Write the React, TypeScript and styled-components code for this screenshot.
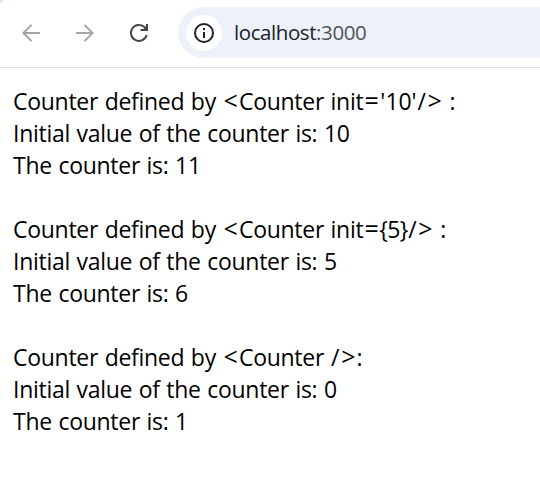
import React from "react";
import styled, { createGlobalStyle } from "styled-components";

const GlobalStyle = createGlobalStyle`
  * { box-sizing: border-box; }
  body { margin: 0; background: #fff; overflow: hidden; }
`;
const Page = styled.div`
  height: 484px;
  background: #fff;
  font-family: "Open Sans", "Noto Sans", sans-serif;
`;
const Toolbar = styled.header`
  display: flex;
  align-items: center;
  height: 68px;
  padding: 0 0 2px 19px;
  border-bottom: 1px solid #dfe1e5;
  background: linear-gradient(135deg, #d3e3fd 2px, #fff 3px);
`;
const NavIcon = styled.svg<{ $color: string }>`
  width: 24px;
  height: 24px;
  margin-right: 30px;
  flex: none;
  fill: none;
  stroke: ${(p) => p.$color};
  stroke-width: 2;
`;
const AddressBar = styled.div`
  display: flex;
  align-items: center;
  flex: 1;
  height: 51px;
  margin-left: -3px;
  padding-left: 8px;
  border-radius: 26px 0 0 26px;
  background: #ecf1fa;
`;
const InfoBadge = styled.div`
  display: grid;
  place-items: center;
  width: 36px;
  height: 36px;
  border-radius: 50%;
  background: #fff;
`;
const Url = styled.span`
  margin-left: 12px;
  padding-bottom: 2px;
  font-size: 20.5px;
  letter-spacing: -0.42px;
  color: #202124;
`;
const Port = styled.span`
  color: #505357;
`;
const Content = styled.main`
  padding: 17px 13px;
`;
const CounterBlock = styled.section`
  margin-bottom: 32px;
`;
const Line = styled.div`
  height: 32px;
  line-height: 32px;
  font-size: 23px;
  letter-spacing: -0.28px;
  word-spacing: 0.85px;
  white-space: pre;
  color: #000;
`;
const Glyph = styled.span<{ $width: number }>`
  display: inline-flex;
  justify-content: center;
  width: ${(p) => p.$width}px;
  font-size: ${(p) => (p.$width > 16 ? 25 : 23)}px;
  line-height: 30px;
  letter-spacing: 0;
`;

const glyphWidths: Record<string, number> = {
  "<": 16.5,
  ">": 16.5,
  "=": 16.5,
  "/": 9.5,
  "'": 5.7,
  "{": 7.5,
  "}": 7.5,
};

function Code({ text }: { text: string }) {
  return (
    <>
      {text.split(/([<>=/'{}])/).map((part, i) =>
        glyphWidths[part] ? <Glyph key={i} $width={glyphWidths[part]}>{part}</Glyph> : part,
      )}
    </>
  );
}

const counters = [
  { tag: "<Counter init='10'/> :", init: 10 },
  { tag: "<Counter init={5}/> :", init: 5 },
  { tag: "<Counter />:", init: 0 },
];

export default function App() {
  return (
    <Page>
      <GlobalStyle />
      <Toolbar>
        <NavIcon $color="#a5a5a5" viewBox="0 0 24 24"><path d="M21 12H4.500M12.500 3.900L4.400 12l8.100 8.100" /></NavIcon>
        <NavIcon $color="#a5a5a5" viewBox="0 0 24 24"><path d="M3 12h16.500M11.500 3.900l8.100 8.100-8.100 8.100" /></NavIcon>
        <NavIcon $color="#454746" viewBox="0 0 24 24">
          <path d="M19.700 14A8 8 0 1 1 17.700 6.300L19.300 8" />
          <path d="M20 3v6h-6.500" />
          <path d="M20 4.500v4.500h-4.500z" fill="#454746" stroke="none" />
        </NavIcon>
        <AddressBar>
          <InfoBadge>
            <svg width="22" height="22" viewBox="0 0 22 22" fill="none" stroke="#202124" strokeWidth="2">
              <circle cx="11" cy="11" r="9" /><path d="M11 10v6M11 6v2" />
            </svg>
          </InfoBadge>
          <Url>localhost<Port>:3000</Port></Url>
        </AddressBar>
      </Toolbar>
      <Content>
        {counters.map(({ tag, init }) => (
          <CounterBlock key={tag}>
            <Line>Counter defined by <Code text={tag} /></Line>
            <Line>Initial value of the counter is: {init}</Line>
            <Line>The counter is: {init + 1}</Line>
          </CounterBlock>
        ))}
      </Content>
    </Page>
  );
}
